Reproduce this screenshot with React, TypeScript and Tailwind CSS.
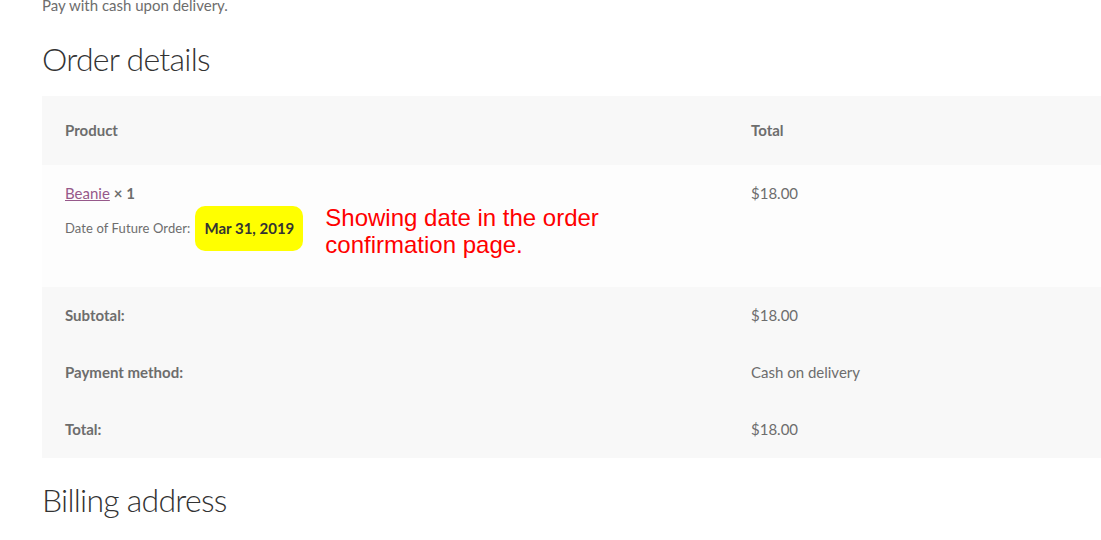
const rows = [
    { label: 'Subtotal:', value: '$18.00' },
    { label: 'Payment method:', value: 'Cash on delivery' },
    { label: 'Total:', value: '$18.00' },
]

const App = () => {
    return (
        <div className="w-[1101px] h-[540px] overflow-hidden bg-white pl-[42px] font-['Lato','Open_Sans',sans-serif] text-[#6d6d6d]">
            <p className="text-[15px] leading-[24px] -mt-[7px]">Pay with cash upon delivery.</p>

            <h2 className="mt-[22px] text-[32px] leading-[40px] tracking-[-0.75px] font-light text-[#333333]">Order details</h2>

            <div className="mt-[17px] w-full">
                {/* header */}
                <div className="grid grid-cols-[686px_1fr] h-[69px] items-center bg-[#f8f8f8] text-[15px] font-bold">
                    <div className="pl-[23px]">Product</div>
                    <div className="pl-[23px]">Total</div>
                </div>

                {/* item */}
                <div className="grid grid-cols-[686px_1fr] h-[122px] bg-[#fdfdfd] text-[15px]">
                    <div className="pl-[23px] pt-4">
                        <div className="h-[25px] leading-[25px]">
                            <a className="text-[#96588a] underline">Beanie</a>
                            <strong className="font-bold ml-1">× 1</strong>
                        </div>
                        <div className="flex items-start">
                            <div className="flex items-center h-[45px]">
                                <span className="text-[13px] tracking-[0.1px]">Date of Future Order:</span>
                                <span className="ml-[5px] h-[45px] px-[9px] flex items-center rounded-[10px] bg-[#ffff00] text-[15px] font-bold text-[#333333]">Mar 31, 2019</span>
                            </div>
                            <p className="ml-[22px] -mt-[2px] font-['Liberation_Sans',Arial,sans-serif] text-[24px] leading-[27px] text-[#ff0000]">
                                Showing date in the order<br />confirmation page.
                            </p>
                        </div>
                    </div>
                    <div className="pl-[23px] pt-4 leading-[25px]">$18.00</div>
                </div>

                {/* totals */}
                {rows.map((row) => (
                    <div key={row.label} className="grid grid-cols-[686px_1fr] h-[57px] items-center bg-[#f8f8f8] text-[15px]">
                        <div className="pl-[23px] font-bold">{row.label}</div>
                        <div className="pl-[23px]">{row.value}</div>
                    </div>
                ))}
            </div>

            <h2 className="mt-[22px] text-[32px] leading-[40px] tracking-[-0.75px] font-light text-[#333333]">Billing address</h2>
        </div>
    )
}

export default App
